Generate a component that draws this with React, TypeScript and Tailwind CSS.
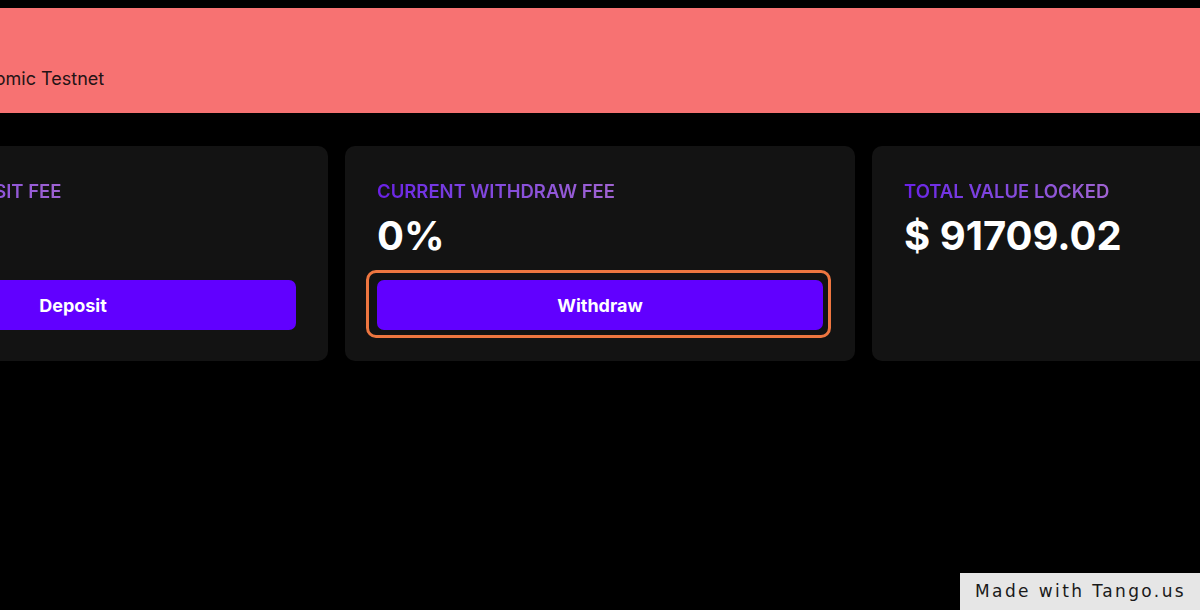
export default function App() {
  const cards = [
    { label: "Current Deposit Fee", value: "0%", action: "Deposit", focus: false },
    { label: "Current Withdraw Fee", value: "0%", action: "Withdraw", focus: true },
    { label: "Total Value Locked", value: "$ 91709.02", action: null, focus: false },
  ];

  return (
    <div
      className="relative h-[610px] w-[1200px] overflow-hidden bg-black pt-2"
      style={{ fontFamily: "Inter, 'Noto Sans', sans-serif" }}
    >
      <div className="flex h-[105px] items-end bg-[#f77272] pb-[22px]">
        <span className="ml-[-23px] text-[18px] leading-6 text-[#241416]">Atomic Testnet</span>
      </div>

      <div className="ml-[-182px] mt-[33px] flex gap-[17px]">
        {cards.map((c) => (
          <div key={c.label} className="h-[215px] w-[510px] shrink-0 rounded-[10px] bg-[#131313] p-8">
            <div className="inline-block bg-gradient-to-r from-[#6a1fe6] to-[#a063d2] bg-clip-text pt-[1px] text-[18.5px] font-semibold uppercase leading-6 text-transparent">
              {c.label}
            </div>
            <div className="mt-[8px] text-[40px] font-bold leading-[48px] text-white">{c.value}</div>
            {c.action && (
              <div
                className={
                  c.focus
                    ? "-ml-[11px] -mr-[8px] mt-[10px] rounded-[10px] border-[3px] border-[#ee7640] pb-[5px] pl-[8px] pr-[5px] pt-[7px]"
                    : "mt-5"
                }
              >
                <button className="flex h-[50px] w-full items-center justify-center rounded-[7px] bg-[#6100ff] text-[18px] font-bold text-white">
                  {c.action}
                </button>
              </div>
            )}
          </div>
        ))}
      </div>

      <div
        className="absolute bottom-0 right-0 flex h-[37px] w-[240px] items-center bg-[#e6e6e6] pl-[15px] text-[17px] tracking-[2.4px] text-[#1a1a1a]"
        style={{ fontFamily: "'DejaVu Sans', sans-serif" }}
      >
        Made with Tango.us
      </div>
    </div>
  );
}
